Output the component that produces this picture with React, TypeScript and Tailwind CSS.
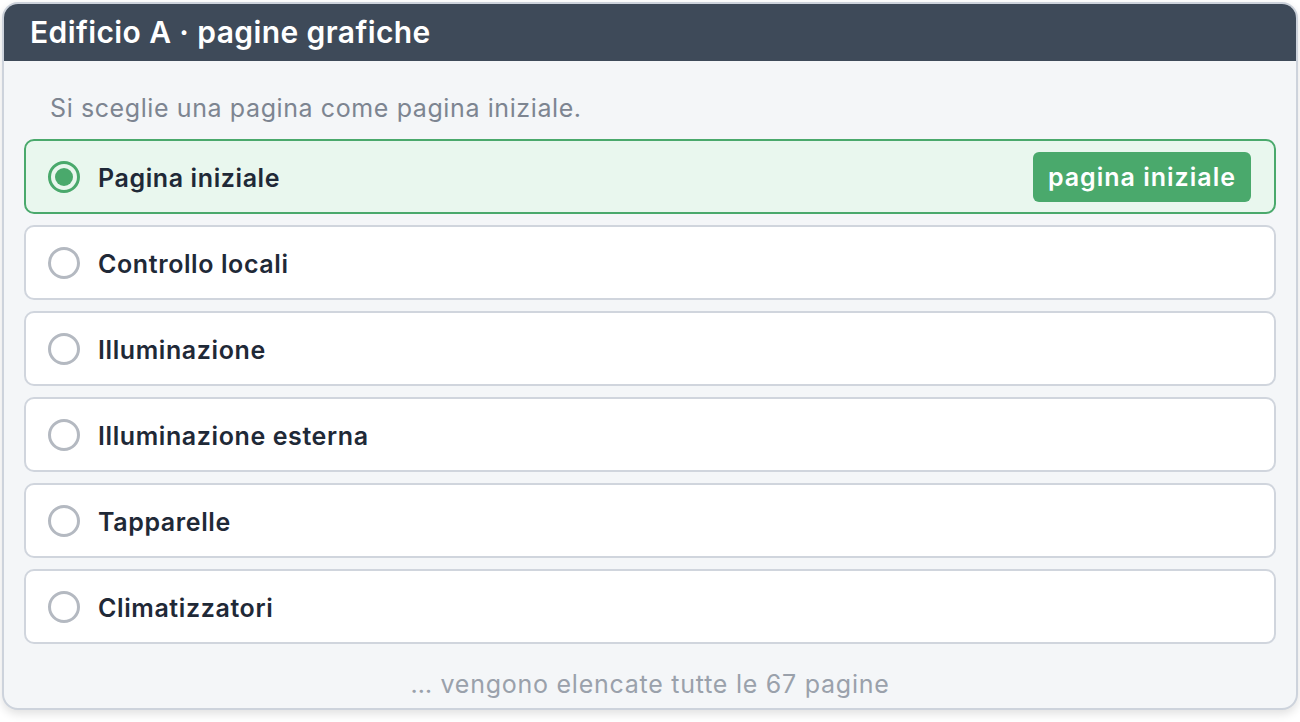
const pages = [
  'Pagina iniziale',
  'Controllo locali',
  'Illuminazione',
  'Illuminazione esterna',
  'Tapparelle',
  'Climatizzatori',
];

function Radio({ checked }: { checked: boolean }) {
  return (
    <span
      className={`flex h-8 w-8 shrink-0 items-center justify-center rounded-full border-[3px] ${
        checked ? 'border-[#4aa96c]' : 'border-[#b4b9c1]'
      }`}
    >
      {checked && <span className="h-[18px] w-[18px] rounded-full bg-[#4aa96c]" />}
    </span>
  );
}

export default function App() {
  const selected = 0;
  return (
    <div className="h-[722px] w-[1300px] bg-white p-[2px] font-['Inter',sans-serif]">
      <div className="flex h-[708px] flex-col overflow-hidden rounded-2xl border-2 border-[#cdd3dc] bg-[#f4f6f8] shadow-[0_4px_10px_rgba(0,0,0,0.12)]">
        <div className="flex h-[57px] shrink-0 items-center bg-[#3e4a59] px-[26px]">
          <h1 className="text-[30px] font-semibold tracking-[0.4px] text-white">Edificio A · pagine grafiche</h1>
        </div>
        <div className="flex flex-1 flex-col px-[20px]">
          <p className="pl-[26px] pt-[32px] pb-[16px] text-[25px] leading-[30px] tracking-[0.6px] text-[#7d8591]">
            Si sceglie una pagina come pagina iniziale.
          </p>
          <ul className="flex flex-col gap-[11px]">
            {pages.map((p, i) => {
              const on = i === selected;
              return (
                <li
                  key={p}
                  className={`flex h-[75px] items-center gap-[18px] rounded-[10px] border-2 pl-[22px] pr-[23px] ${
                    on ? 'border-[#4aa96c] bg-[#e9f7ee]' : 'border-[#d0d5dd] bg-white'
                  }`}
                >
                  <Radio checked={on} />
                  <span className="flex-1 pt-[4px] text-[25px] font-semibold tracking-[0.6px] text-[#1f2937]">{p}</span>
                  {on && (
                    <span className="flex h-[50px] items-center rounded-md bg-[#4aa96c] px-[15px] pt-[3px] text-[25px] font-semibold tracking-[1px] text-white">
                      pagina iniziale
                    </span>
                  )}
                </li>
              );
            })}
          </ul>
          <p className="pt-[22px] text-center text-[25px] tracking-[0.75px] text-[#9aa1ab]">… vengono elencate tutte le 67 pagine</p>
        </div>
      </div>
    </div>
  );
}
